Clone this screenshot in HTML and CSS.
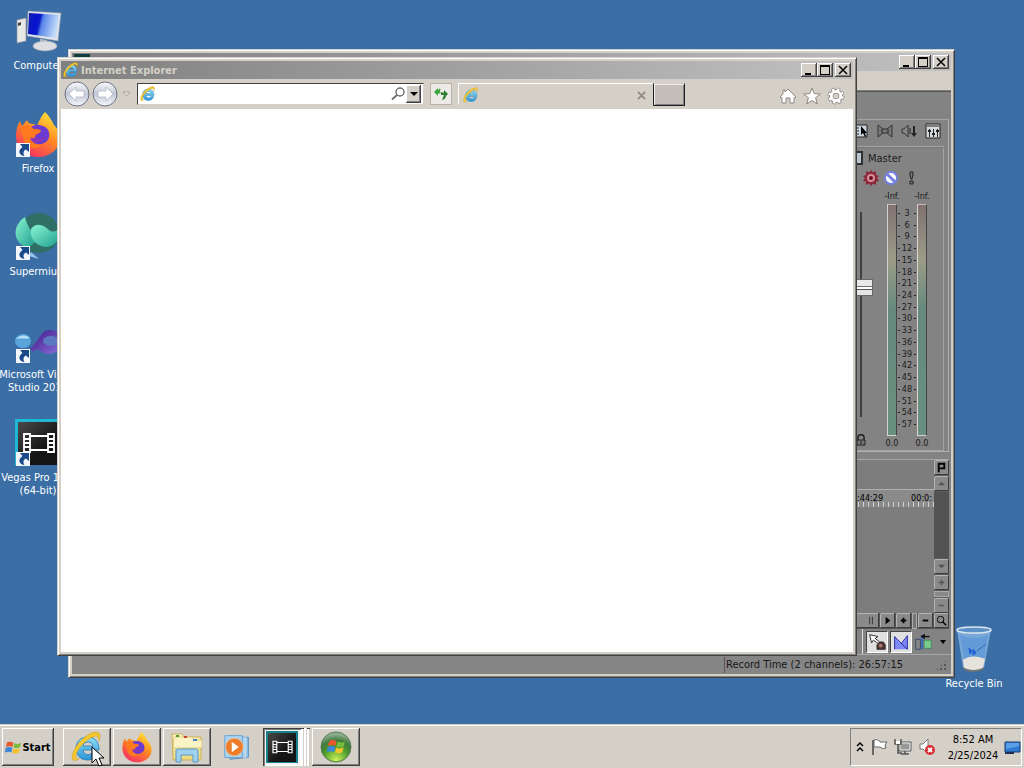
FILE: index.html
```html
<!DOCTYPE html>
<html lang="en">
<head>
<meta charset="utf-8">
<title>Desktop</title>
<link rel="stylesheet" href="styles.css">
</head>
<body>
<svg class="defs" aria-hidden="true">
  <defs>
    <linearGradient id="ieBlue" x1="0" y1="0" x2="0" y2="1"><stop offset="0" stop-color="#8fe0f8"/><stop offset="1" stop-color="#2a94d8"/></linearGradient>
    <linearGradient id="screen" x1="0" y1="0" x2="1" y2=".2"><stop offset="0" stop-color="#1420a8"/><stop offset=".3" stop-color="#0512d0"/><stop offset=".42" stop-color="#0a1cc8"/><stop offset=".52" stop-color="#5a86e8"/><stop offset="1" stop-color="#c4dcfa"/></linearGradient>
    <linearGradient id="fire" x1=".8" y1="0" x2=".2" y2="1"><stop offset="0" stop-color="#ffe83c"/><stop offset=".45" stop-color="#ff8a22"/><stop offset="1" stop-color="#f5286a"/></linearGradient>
    <linearGradient id="navBtn" x1="0" y1="0" x2="0" y2="1"><stop offset="0" stop-color="#fafbfd"/><stop offset=".5" stop-color="#c2c8d6"/><stop offset="1" stop-color="#f4f8fd"/></linearGradient>
    <radialGradient id="orb" cx=".5" cy=".95" r=".95"><stop offset="0" stop-color="#d0f45a"/><stop offset=".45" stop-color="#4f9f2c"/><stop offset=".7" stop-color="#3f7a3c"/><stop offset="1" stop-color="#a8c0a8"/></radialGradient>
    <linearGradient id="teal" x1="0" y1="0" x2="1" y2="1"><stop offset="0" stop-color="#8af4d0"/><stop offset="1" stop-color="#1d9f90"/></linearGradient>
    <linearGradient id="slate" x1="0" y1="0" x2="1" y2="1"><stop offset="0" stop-color="#4a4a4a"/><stop offset=".6" stop-color="#141414"/></linearGradient>
    <linearGradient id="purple" x1="0" y1="0" x2="1" y2="1"><stop offset="0" stop-color="#3c1488"/><stop offset="1" stop-color="#8a72d8"/></linearGradient>
    <linearGradient id="folder" x1="0" y1="0" x2="0" y2="1"><stop offset="0" stop-color="#fbf3bc"/><stop offset="1" stop-color="#ecd67c"/></linearGradient>
    <symbol id="ie" viewBox="0 0 32 32">
      <path d="M28 19H12c.4 3 2.200 4.500 5 4.500 2.300 0 3.800-.8 4.800-2.500h5.700C25.800 26 22 29 16.500 29 9.800 29 5 24.300 5 17.500S9.800 6 16.700 6 28.200 10.800 28 19zM22 15c-.4-2.500-2-4-4.900-4-2.800 0-4.600 1.500-5.100 4z" fill="url(#ieBlue)" stroke="#2478b8" stroke-width=".8"/>
      <path d="M8.500 27.500C3 31.500-.8 29.500 2 21.500 5.500 12.500 15.500 2.500 23.500 1.300c6.500-.8 6.500 4.200 4.300 8.900.4-4.500-1.800-6-5.500-4.500C15.500 8.500 8 16 5.500 22.500c-1.600 4.500-.5 6 3 5z" fill="#f3c62c" stroke="#c99a1c" stroke-width=".5"/>
    </symbol>
    <symbol id="firefox" viewBox="0 0 48 48">
      <path d="M31 2c5 5 7 9 9 13 4 4 6 8 6 13 0 11-10 19-22 19S2 38 2 26c0-5 1-11 4-15l2 5 5-6c1 3 3 4 7 4l3 2c2-5 4-10 8-14z" fill="url(#fire)"/>
      <path d="M17 17c4-3 9-2 12-1 5 2 7 6 6 11-1 7-12 10-17 4-3-3-3-8-1-14z" fill="#6a3bd0"/>
      <path d="M18 22c3-2 6-2 8 0-1 3-4 3-5 5 3 3 8 2 10-1 0 6-11 9-16 3-4-5-3-10 0-13z" fill="#8a35b8"/>
      <path d="M6 16c6-2 11 0 14 3 3 0 6 0 7 2-1 3-6 2-6 6-2 2-4 1-5 0 2 8 9 9 14 7-5 6-16 6-20-3z" fill="#ff7a1e"/>
    </symbol>
    <symbol id="link" viewBox="0 0 14 14">
      <path d="M0 0h14v14H0z" fill="#f2f6fb"/><path d="M4 1h9v8l-3-2.500C7 8 7 10.500 8.500 13 3.500 12.500 1 8 6.500 4z" fill="#1b4a8c"/>
    </symbol>
    <symbol id="film" viewBox="0 0 34 22">
      <path d="M2 1v20M8 1v20M26 1v20M32 1v20M2 2h6M2 7h6M2 11h6M2 15h6M2 20h6M26 2h6M26 7h6M26 11h6M26 15h6M26 20h6M8 4h18M8 18h18" fill="none" stroke="#fff" stroke-width="1.800"/>
    </symbol>
    <symbol id="flag" viewBox="0 0 18 18">
      <path d="M2 4c3-2 5-1 7 0L8 8.500C6 7.500 4 7 1 8.500z" fill="#e8582c"/><path d="M10 4.500c3 1 5 1 7-.5L16 8.500c-2 1.500-5 1.500-7 .5z" fill="#7cbc3c"/><path d="M.8 9.500c3-1.500 5-1 7 0l-1 4.800C5 13.300 3 13-.2 14.300z" fill="#3c86d8"/><path d="M8.700 10c3 1.300 5 1 7-.5l-1 4.800c-2 1.500-5 1.500-7 .4z" fill="#f5c22c"/>
    </symbol>
    <symbol id="min" viewBox="0 0 16 14"><path d="M4 10h6v2H4z"/></symbol>
    <symbol id="max" viewBox="0 0 16 14"><path d="M3 2h10v10H3zM4 4v7h8V4z" fill-rule="evenodd"/></symbol>
    <symbol id="close" viewBox="0 0 16 14"><path d="M4 3l8 8M12 3l-8 8" stroke="#000" stroke-width="1.500"/></symbol>
  </defs>
</svg>

<div class="screen">
  <main class="desktop">
    <nav class="shortcuts" aria-label="Desktop icons">
      <a class="shortcut" href="#computer">
        <svg class="pic" viewBox="0 0 48 48"><path d="M3 13l9-2v23l-9 2z" fill="#e8e8e6" stroke="#8d9299" stroke-width=".7"/><path d="M4 16l3-1v3l-3 1z" fill="#444"/><path d="M14 4l33 2-3 28-31-5z" fill="#dfe3ea" stroke="#8c96a6" stroke-width=".6"/><path d="M15 6l30 2-3 23-28-4z" fill="url(#screen)"/><path d="M26 32l7 1v6h-7z" fill="#b8bcc4"/><ellipse cx="31" cy="39" rx="12" ry="5" fill="#dcdee2" stroke="#9a9fa8" stroke-width=".6"/></svg>
        <span>Computer</span></a>
      <a class="shortcut" href="#firefox">
        <svg class="pic" viewBox="0 0 48 48"><use href="#firefox"/><use href="#link" x="2" y="33" width="14" height="14"/></svg>
        <span>Firefox</span></a>
      <a class="shortcut" href="#supermium">
        <svg class="pic" viewBox="0 0 48 48"><circle cx="25" cy="20" r="20" fill="#2f6f66"/><path d="M11 4c2 10 8 14 10 25-6 8-14 5-18-3C-1 18 4 8 11 4z" fill="url(#teal)"/><path d="M17 16c6-8 14-3 18 1 4 3 8 1 11-2 1 14-9 23-21 17-6-3-9-9-8-16z" fill="url(#teal)"/><path d="M15 43l10 3-8-7z" fill="#9cc4ee"/><use href="#link" x="2" y="33" width="14" height="14"/></svg>
        <span>Supermium</span></a>
      <a class="shortcut" href="#visual-studio">
        <svg class="pic" viewBox="0 0 48 48"><ellipse cx="9" cy="25" rx="8" ry="7" fill="#5aa4dc"/><path d="M2 23c5-5 10-4 14-1-4 1-9 0-14 1z" fill="#b8e0f6"/><path d="M16 32c8-4 10-18 20-18 8 0 12 6 12 12s-6 12-13 12c-9 0-10-8-16-2z" fill="url(#purple)"/><ellipse cx="37" cy="25" rx="8" ry="5" fill="#5c78c0"/><use href="#link" x="2" y="33" width="14" height="14"/></svg>
        <span>Microsoft Visual<br>Studio 2019</span></a>
      <a class="shortcut" href="#vegas">
        <svg class="pic" viewBox="0 0 48 48"><path d="M1 0h47v46H1z" fill="#1fb8d4"/><path d="M4 3h44v43H4z" fill="url(#slate)"/><use href="#film" x="8" y="13" width="34" height="22"/><use href="#link" x="2" y="33" width="14" height="14"/></svg>
        <span>Vegas Pro 16.0<br>(64-bit)</span></a>
    </nav>

    <a class="shortcut bin" href="#recycle">
      <svg class="pic" viewBox="0 0 48 48"><path d="M7 4l6 39c4 4 17 4 21 0l7-39z" fill="#8fbce8" fill-opacity=".75"/><path d="M10 10l4 23h20l4-23c-8 4-20 4-28 0z" fill="#4d8edb" fill-opacity=".5"/><path d="M13 35c6-5 16-4 22-1l-2 9c-5 3-14 3-19 0z" fill="#e6e2dc"/><path d="M19 23l3 3-2 3zM23 24l3 4-3 2z" fill="#2460d4" stroke="#2460d4"/><path d="M36 19l-9 7" stroke="#3468a8"/><path d="M13 42c5 4 16 4 21 0v2c-4 4-17 4-21 0z" fill="#6e7478"/><ellipse cx="24" cy="5" rx="17" ry="3" fill="#5d92c8" stroke="#dbe6ee" stroke-width="1.500"/></svg>
      <span>Recycle Bin</span></a>

    <section class="window vegas" aria-label="Vegas Pro">
      <header class="titlebar">
        <span class="vegas-mark"></span><span class="title"></span>
        <div class="controls">
          <button aria-label="Minimize"><svg><use href="#min"/></svg></button><button aria-label="Maximize"><svg><use href="#max"/></svg></button><button aria-label="Close"><svg><use href="#close"/></svg></button>
        </div>
      </header>
      <div class="menubar"></div>
      <div class="vegas-body">
        <section class="dock">
          <div class="dock-tools">
            <button aria-label="Properties"><svg viewBox="0 0 16 16"><path d="M-4 2h18v12H-4z" fill="#ccd6e2" stroke="#222"/><path d="M1 5h5M1 8h5M1 11h5" stroke="#222"/><path d="M8 3v9l2-2 2 4 1-1-1-3h2z"/></svg></button>
            <button aria-label="Downmix"><svg viewBox="0 0 16 16"><path d="M1 2l5 4h4l5-4v12l-5-4H6l-5 4z" fill="#777" stroke="#333"/><path d="M5 6v4M11 6v4" stroke="#222"/></svg></button>
            <button aria-label="Dim output"><svg viewBox="0 0 16 16"><path d="M1 6h2l4-4v12L3 10H1z" fill="#888" stroke="#333"/><path d="M9 5v6" stroke="#222"/><path d="M12 3h2v7h2l-3 4-3-4h2z" fill="#222"/></svg></button>
            <button aria-label="Mixer"><svg viewBox="0 0 16 16"><path d="M1 1h14v14H1z" fill="#d6dade" stroke="#222"/><path d="M2 3h12" stroke="#222"/><path d="M4.500 6v8M8.500 6v8M12.500 6v8" stroke="#222"/><path d="M3 8h3M7 11h3M11 8h3" stroke="#222" stroke-width="2"/></svg></button>
          </div>
          <div class="strip">
            <div class="strip-name"><i></i>Master</div>
            <div class="strip-tools">
              <svg viewBox="0 0 16 16"><path d="M8 0l2 2.500L13 1v4l3 1-2 2 2 3-3 .500V15l-3-1.500L8 16l-2-2.500L3 15v-3.500L0 11l2-3-2-2 3-1V1l3 1.500z" fill="#8c2638"/><circle cx="8" cy="8" r="4" fill="#d6909a"/><circle cx="8" cy="8" r="2" fill="#6c1020"/></svg>
              <svg viewBox="0 0 16 16"><circle cx="8" cy="8" r="6" fill="#fff" stroke="#7480e0" stroke-width="2"/><path d="M4 4l8 8" stroke="#7480e0" stroke-width="3"/></svg>
              <svg viewBox="0 0 16 16"><path d="M7 2h3v3L9 9H8L7 5zM7 11h3v3H7z" fill="#777" stroke="#222"/></svg>
            </div>
            <div class="mixer">
              <div class="fader"><span class="thumb"></span>
                <svg class="lock" viewBox="0 0 10 12"><path d="M2 6V3c0-3 6-3 6 0v3" fill="none" stroke="#222" stroke-width="1.500"/><path d="M1 6h8v5H1z" fill="#777" stroke="#222"/><path d="M5 7v3" stroke="#222"/></svg></div>
              <div class="meters">
                <b>-Inf.</b><span></span><b>-Inf.</b>
                <i class="meter"></i>
                <ol class="scale"><li>3</li><li>6</li><li>9</li><li>12</li><li>15</li><li>18</li><li>21</li><li>24</li><li>27</li><li>30</li><li>33</li><li>36</li><li>39</li><li>42</li><li>45</li><li>48</li><li>51</li><li>54</li><li>57</li></ol>
                <i class="meter"></i>
                <b>0.0</b><span></span><b>0.0</b>
              </div>
            </div>
          </div>
        </section>
        <section class="timeline">
          <div class="tracks">
            <div class="ruler"><div class="times"><span>:44:29</span><span>00:0:</span></div><div class="ticks"></div></div>
          </div>
          <div class="vscroll">
            <button class="key" aria-label="Marker"><svg viewBox="0 0 14 14"><path d="M4 12V3h6v5H5" fill="none" stroke="#000" stroke-width="2"/></svg></button>
            <button class="key" aria-label="Scroll up"><svg viewBox="0 0 14 14"><path d="M3 9l4-4 4 4z" fill="#555"/></svg></button>
            <span class="track"></span>
            <button class="key" aria-label="Scroll down"><svg viewBox="0 0 14 14"><path d="M3 5l4 4 4-4z" fill="#555"/></svg></button>
            <button class="key" aria-label="Taller tracks"><svg viewBox="0 0 14 14"><path d="M4 7h6M7 4v6" stroke="#555" stroke-width="1.500"/></svg></button>
            <span class="bar"></span>
            <button class="key" aria-label="Shorter tracks"><svg viewBox="0 0 14 14"><path d="M4 7h6" stroke="#555" stroke-width="1.500"/></svg></button>
          </div>
        </section>
        <div class="hscroll">
          <span class="key grab"><svg viewBox="0 0 14 14"><path d="M5 3v8M8 3v8" stroke="#333"/></svg></span>
          <button class="key" aria-label="Scroll right"><svg viewBox="0 0 14 14"><path d="M5 3l5 4-5 4z"/></svg></button>
          <button class="key" aria-label="Zoom in"><svg viewBox="0 0 14 14"><path d="M4 7h6M7 4v6" stroke="#000" stroke-width="2"/></svg></button>
          <span class="bar"></span>
          <button class="key" aria-label="Zoom out"><svg viewBox="0 0 14 14"><path d="M4 7h6" stroke="#000" stroke-width="2"/></svg></button>
          <button class="key" aria-label="Zoom tool"><svg viewBox="0 0 14 14"><circle cx="6" cy="6" r="3.500" fill="none" stroke="#000"/><path d="M8 8l4 4" stroke="#000" stroke-width="1.500"/></svg></button>
        </div>
        <div class="edit-tools">
          <button class="toggle" aria-label="Envelope tool"><svg viewBox="0 0 22 20"><path d="M3 2l2 9 2-3 6 4 1-2-5-4 3-2z" fill="#fff" stroke="#222"/><path d="M11 13l3-3h4l2 3v5h-9z" fill="#5b3434" stroke="#222"/><circle cx="15" cy="14" r="2" fill="#a67a7a"/></svg></button>
          <button class="toggle" aria-label="Crossfades"><svg viewBox="0 0 22 20"><path d="M4 4l7 8 7-8v14H4z" fill="#7c88f4"/><path d="M4 18V4l14 14V3l-7 9" fill="none" stroke="#20209c"/></svg></button>
          <button aria-label="Auto ripple"><svg viewBox="0 0 22 20"><path d="M2 7h5v11H2z" fill="#888" stroke="#346"/><path d="M9 2v16" stroke="#356ac0" stroke-width="2"/><path d="M11 8h8v9h-8z" fill="#77cc8c" stroke="#4f7f5c"/><path d="M17 4h-5" stroke="#111" stroke-width="1.500"/><path d="M12 1L7 4l5 3z" fill="#111"/></svg></button>
          <button class="more" aria-label="Ripple options"><svg viewBox="0 0 8 8"><path d="M1 2h6L4 6z"/></svg></button>
        </div>
      </div>
      <footer class="status"><span>Record Time (2 channels): 26:57:15</span><i class="grip"></i></footer>
    </section>

    <section class="window browser" aria-label="Internet Explorer">
      <header class="titlebar">
        <svg class="mark"><use href="#ie"/></svg><span class="title">Internet Explorer</span>
        <div class="controls">
          <button aria-label="Minimize"><svg><use href="#min"/></svg></button><button aria-label="Maximize"><svg><use href="#max"/></svg></button><button aria-label="Close"><svg><use href="#close"/></svg></button>
        </div>
      </header>
      <div class="navbar">
        <div class="travel">
          <button aria-label="Back"><svg viewBox="0 0 26 26"><circle cx="13" cy="13" r="12" fill="url(#navBtn)" stroke="#6c7280"/><path d="M5 13l7-7v4h8v6h-8v4z" fill="#fff" stroke="#b4b9c6" stroke-width=".8"/></svg></button>
          <button aria-label="Forward"><svg viewBox="0 0 26 26"><circle cx="13" cy="13" r="12" fill="url(#navBtn)" stroke="#6c7280"/><path d="M21 13l-7-7v4H6v6h8v4z" fill="#fff" stroke="#b4b9c6" stroke-width=".8"/></svg></button>
          <button class="recent" aria-label="Recent pages"><svg viewBox="0 0 9 6"><path d="M1 1h7L4.500 5z" fill="#e6e3dd" stroke="#a8a59c"/></svg></button>
        </div>
        <form class="address">
          <svg class="mark"><use href="#ie"/></svg>
          <input type="text" aria-label="Address">
          <button type="button" class="find" aria-label="Search"><svg viewBox="0 0 16 16"><circle cx="10" cy="6" r="4" fill="none" stroke="#707070" stroke-width="1.500"/><path d="M7 9l-5 4.500" stroke="#707070" stroke-width="2"/></svg></button>
          <button type="button" class="drop" aria-label="Show address list"><svg viewBox="0 0 8 8"><path d="M0 2h8L4 6z"/></svg></button>
        </form>
        <button class="refresh" aria-label="Refresh"><svg viewBox="0 0 16 16"><path d="M1 6l4-4v2.500h1.500L8 7v0L6 7.500H5V10z" fill="#3aa53a"/><path d="M5 6l2-3" stroke="#3aa53a" stroke-width="1.500"/><path d="M15 8l-4-4v2.500H8V9h3v0l-2 5c3-1 4-2.500 4-4z" fill="#2c7f2c"/></svg></button>
        <div class="tab"><svg class="mark"><use href="#ie"/></svg><button aria-label="Close tab"><svg viewBox="0 0 10 10"><path d="M1 1l8 8M9 1L1 9" stroke="#8f8b84" stroke-width="2"/></svg></button></div>
        <button class="newtab" aria-label="New tab"></button>
        <div class="tools">
          <button aria-label="Home"><svg viewBox="0 0 18 18"><path d="M9 2l8 8-1.500 1L15 10.500V16h-4v-5H7v5H3v-5.500L2.500 11 1 10l3-3V3h2v2z" fill="#fff" stroke="#8a8781"/></svg></button>
          <button aria-label="Favorites"><svg viewBox="0 0 18 18"><path d="M9 1l2.300 5.700 6 .3-4.700 3.800L14.200 17 9 13.500 3.800 17l1.600-6.200L.7 7l6-.3z" fill="#fff" stroke="#8a8781"/></svg></button>
          <button aria-label="Tools"><svg viewBox="0 0 18 18"><g fill="none"><circle cx="9" cy="9" r="6.500" stroke="#8a8781" stroke-width="4" stroke-dasharray="3 2.100"/><circle cx="9" cy="9" r="4.800" stroke="#8a8781" stroke-width="4.400"/><circle cx="9" cy="9" r="6.500" stroke="#fff" stroke-width="2.600" stroke-dasharray="2.200 2.900" stroke-dashoffset="-.4"/><circle cx="9" cy="9" r="4.700" stroke="#fff" stroke-width="2.800"/></g></svg></button>
        </div>
      </div>
      <div class="page"></div>
    </section>
  </main>

  <footer class="taskbar">
    <button class="start"><svg><use href="#flag"/></svg>Start</button>
    <div class="tasks">
      <button class="task" aria-label="Internet Explorer"><svg viewBox="0 0 32 32"><use href="#ie"/></svg></button>
      <button class="task" aria-label="Firefox"><svg viewBox="0 0 32 32"><use href="#firefox" width="32" height="32"/></svg></button>
      <button class="task" aria-label="Windows Explorer"><svg viewBox="0 0 32 32"><path d="M1 3h10l2 3h17v23H2z" fill="url(#folder)" stroke="#cdb25a"/><path d="M3 6h18l2 3h8v8H2z" fill="#faf3c4" stroke="#d3bc6c" stroke-width=".7"/><path d="M5 4h3v2H5z" fill="#4a9a3c"/><path d="M13 5h3v2h-3z" fill="#c8442c"/><path d="M22 8h4v2h-4z" fill="#4a80c8"/><path d="M5 31V20c0-2 1-2 3-2h16c2 0 3 0 3 2v11h-5v-7H10v7z" fill="#9fd0ee" stroke="#5898c4"/></svg></button>
      <button class="task flat" aria-label="Media Player"><svg viewBox="0 0 32 32"><path d="M8 3l21 2v23l-21 2z" fill="#8fbfe4" stroke="#5288b8"/><path d="M24 4v25M26 4v25" stroke="#d8ecfa"/><path d="M2 3h20v25H2z" fill="#a9d3f0" stroke="#68a0cc"/><circle cx="13" cy="16" r="10" fill="#ee7b28" stroke="#f5b684"/><path d="M10 10l8 6-8 6z" fill="#fff"/></svg></button>
      <button class="task active" aria-label="Vegas Pro"><svg viewBox="0 0 32 32"><path d="M0 0h32v32H0z" fill="#17818e"/><path d="M2 2h28v29H2z" fill="url(#slate)"/><use href="#film" x="5" y="9" width="23" height="14"/></svg></button>
      <span class="stack"></span>
      <button class="task" aria-label="Windows"><svg viewBox="0 0 32 32"><circle cx="16" cy="16" r="15" fill="url(#orb)" stroke="#4f7a4c"/><use href="#flag" x="7" y="6" width="19" height="19"/></svg></button>
    </div>
    <div class="tray">
      <button aria-label="Show hidden icons"><svg class="chev" viewBox="0 0 8 12"><path d="M1 5l3-3 3 3M1 10l3-3 3 3" fill="none" stroke="#000" stroke-width="1.500"/></svg></button>
      <button aria-label="Action Center"><svg viewBox="0 0 18 18"><path d="M3 2v15" stroke="#666" stroke-width="2"/><path d="M4 2c3-1 5 0 6 2h7l-2 3 1 3c-3 1-5 0-6-1H4z" fill="#fff" stroke="#666"/></svg></button>
      <button aria-label="Network"><svg viewBox="0 0 18 18"><path d="M5 4h12v9H5z" fill="#999" stroke="#555"/><path d="M6 5h10v7H6z" fill="none" stroke="#eee"/><path d="M11 13v3M7 16h8" stroke="#555" stroke-width="1.500"/><path d="M1 1v5h6V1M4 6v9h4" fill="none" stroke="#555" stroke-width="1.500"/><path d="M2 3h4v3H2z" fill="#fff"/></svg></button>
      <button aria-label="Volume muted"><svg viewBox="0 0 18 18"><path d="M2 6h3l5-5v15l-5-5H2z" fill="#fff" stroke="#777"/><circle cx="12" cy="12" r="5" fill="#d92c34"/><path d="M10 10l4 4M14 10l-4 4" stroke="#fff" stroke-width="1.800"/></svg></button>
      <div class="clock"><time>8:52 AM</time><time>2/25/2024</time></div>
      <button class="peek" aria-label="Show desktop"><svg viewBox="0 0 18 18"><path d="M2 4h15v10H2z" fill="#2f7bd4" stroke="#1c3c70"/><path d="M3 5h13v3L3 11z" fill="#5a9fe8"/><path d="M2 14h9v2H2z" fill="#1b3052"/></svg></button>
    </div>
  </footer>
  <svg class="cursor" viewBox="0 0 14 22"><path d="M1 1v16l4-4 3 7 3-1-3-7h5z" fill="#fff" stroke="#000"/></svg>
</div>
</body>
</html>
```
FILE: styles.css
```css
* { box-sizing: border-box; }
body {
  margin: 0;
  font: 11px/13px "DejaVu Sans Condensed", "DejaVu Sans", sans-serif;
  color: #000;
}
button { margin: 0; padding: 0; border: 0; background: none; font: inherit; color: inherit; display: grid; place-items: center; }
svg { display: block; flex: none; }
.defs { position: absolute; width: 0; height: 0; }

.screen { position: relative; height: 100vh; display: grid; grid-template-rows: 1fr auto; overflow: hidden; background: #3a6ea5; }
.desktop { position: relative; min-height: 0; }

/* desktop icons */
.shortcuts { width: 76px; padding-top: 7px; }
.shortcut { height: 103px; display: flex; flex-direction: column; align-items: center; gap: 4px; color: #fff; text-align: center; text-decoration: none; white-space: nowrap; }
.pic { width: 48px; height: 48px; }
.bin { position: absolute; right: 12px; bottom: -4px; width: 76px; }

/* windows */
.window { position: absolute; display: flex; flex-direction: column; padding: 3px; background: #d4d0c8; border: 1px solid; border-color: #d4d0c8 #404040 #404040 #d4d0c8; box-shadow: inset 1px 1px #fff, inset -1px -1px #808080; }
.vegas { left: 68px; top: 49px; right: 69px; bottom: 46px; }
.browser { left: 57px; top: 57px; right: 167px; bottom: 68px; }
.titlebar { flex: none; height: 18px; display: flex; align-items: center; gap: 2px; padding: 0 2px; background: linear-gradient(90deg, #808080, #c0c0c0); }
.title { flex: 1; color: #d4d0c8; font-weight: bold; }
.mark { width: 16px; height: 16px; }
.vegas-mark { width: 16px; height: 16px; background: #123c40; }
.controls { display: flex; }
.controls button { width: 16px; height: 14px; background: #d4d0c8; box-shadow: inset -1px -1px #404040, inset 1px 1px #fff, inset -2px -2px #808080; }
.controls button:last-child { margin-left: 2px; }
.controls svg { width: 16px; height: 14px; }

/* browser */
.navbar { flex: none; height: 30px; display: flex; align-items: center; padding-right: 8px; }
.travel { display: flex; align-items: center; gap: 2px; width: 76px; padding-left: 3px; }
.travel svg { width: 26px; height: 26px; }
.travel .recent svg { width: 9px; height: 6px; }
.travel .recent { margin-left: 2px; }
.address { width: 287px; height: 22px; display: flex; align-items: center; padding: 1px 2px; background: #fff; border: 1px solid; border-color: #404040 #d4d0c8 #d4d0c8 #404040; }
.address input { flex: 1; min-width: 0; border: 0; outline: 0; padding: 0 4px; background: none; font: inherit; }
.find svg { width: 16px; height: 16px; }
.drop { width: 15px; height: 18px; background: #d4d0c8; box-shadow: inset -1px -1px #404040, inset 1px 1px #fff, inset -2px -2px #808080; }
.drop svg { width: 8px; height: 8px; }
.refresh { width: 22px; height: 22px; margin: 0 6px; background: #eceae6; border: 1px solid #b8b4ac; }
.refresh svg { width: 16px; height: 16px; }
.tab { width: 195px; height: 22px; display: flex; align-items: center; justify-content: space-between; padding: 2px 6px 0 4px; border: 1px solid; border-color: #fff transparent transparent #fff; }
.tab button svg { width: 9px; height: 9px; }
.newtab { width: 32px; height: 23px; background: #c4c0b9; border: 1px solid; border-color: #d4d0c8 #202020 #202020 #202020; box-shadow: inset 1px 1px #eee, inset -1px -1px #808080; }
.tools { flex: 1; display: flex; justify-content: flex-end; gap: 6px; padding-top: 4px; }
.tools svg { width: 18px; height: 18px; }
.page { flex: 1; background: #fff; }

/* editor */
.menubar { flex: none; height: 20px; border-bottom: 1px solid #808080; }
.vegas-body { flex: 1; min-height: 0; display: flex; flex-direction: column; align-items: flex-end; padding: 27px 2px 0 0; background: #838383; border-top: 1px solid #555; }
.dock { flex: 1; width: 96px; min-height: 0; display: flex; flex-direction: column; padding-right: 4px; border: 1px solid; border-color: #a4a4a4 #b0b0b0 #b0b0b0 #838383; }
.dock-tools { display: flex; gap: 8px; justify-content: flex-end; padding: 3px 3px 7px 0; border-bottom: 1px solid #a8a8a8; }
.dock-tools svg, .strip-tools svg { width: 16px; height: 16px; }
.strip { flex: 1; min-height: 0; display: flex; flex-direction: column; border: 1px solid; border-color: #747474 #a4a4a4 #a4a4a4 #747474; color: #1c1c1c; }
.strip-name { display: flex; align-items: center; gap: 5px; height: 20px; }
.strip-name i { width: 8px; height: 14px; background: #b8c4d0; border: 2px solid #303030; }
.strip-tools { display: flex; gap: 4px; padding: 2px 0 2px 8px; }
.mixer { flex: 1; min-height: 0; display: flex; gap: 14px; font-size: 9px; line-height: 12px; }
.fader { width: 18px; margin-top: 24px; display: flex; flex-direction: column; align-items: center; background: linear-gradient(#404040, #404040) 5px 0 / 2px 205px no-repeat; }
.thumb { flex: none; width: 18px; height: 17px; margin-top: 67px; background: linear-gradient(#e8e8e8 0 6px, #707070 6px 7px, #fff 7px 9px, #555 9px 10px, #e4e4e4 10px); border: 1px solid #666; }
.lock { width: 10px; height: 12px; margin: auto 6px 4px 0; }
.meters { display: grid; grid-template-columns: 10px 20px 10px; grid-template-rows: 16px 1fr 14px; min-height: 0; }
.meters b { display: flex; justify-content: center; align-items: center; font-weight: normal; white-space: nowrap; }
.meter { border: 1px solid; border-color: #d0b8b0 #444 #d8d4cc #d8d4cc; background: linear-gradient(#807272, #9c9c88 24%, #668a7e 45%, #689080); }
.scale { list-style: none; margin: 0; padding: 4px 0 6px; display: flex; flex-direction: column; justify-content: space-between; min-height: 0; }
.scale li { height: 11px; line-height: 11px; text-align: center; background: linear-gradient(#222, #222) 1px 5px / 2px 1px no-repeat, linear-gradient(#222, #222) 17px 5px / 2px 1px no-repeat; }
.timeline { flex: none; width: 96px; height: 154px; margin-top: 7px; display: flex; border-top: 1px solid #a8a8a8; background: #7d7d7d; }
.tracks { flex: 1; min-width: 0; padding-top: 29px; overflow: hidden; }
.ruler { height: 18px; border-top: 1px solid #b0b0b0; background: #8a8a8a; font-size: 9px; line-height: 12px; }
.times { display: flex; justify-content: flex-end; gap: 28px; white-space: nowrap; padding: 2px 2px 0 0; height: 12px; }
.ticks { height: 5px; background: repeating-linear-gradient(90deg, #d0d0d0 0 1px, transparent 1px 5px); }
.vscroll { width: 15px; display: flex; flex-direction: column; gap: 1px; background: #5c5c5c; }
.key { flex: none; width: 15px; height: 15px; border: 1px solid; border-color: #b4b4b4 #3c3c3c #3c3c3c #b4b4b4; border-radius: 2px; background: #8a8a8a; }
.key svg { width: 13px; height: 13px; }
.track { flex: 1; background: #535353; }
.vscroll .bar { height: 6px; border: 1px solid #aaa; background: #888; }
.hscroll { flex: none; display: flex; gap: 1px; height: 16px; width: 96px; justify-content: flex-end; background: #555; }
.grab { width: 26px; padding-left: 11px; }
.hscroll .bar { width: 6px; border: 1px solid #aaa; background: #777; }
.edit-tools { flex: none; width: 87px; height: 25px; display: flex; align-items: center; gap: 2px; border-left: 1px solid #ddd; padding-left: 3px; }
.edit-tools svg { width: 20px; height: 20px; }
.toggle { width: 22px; height: 22px; background: #e0e0e0; border: 1px solid; border-color: #444 #fff #fff #444; }
.edit-tools .more svg { width: 8px; height: 8px; }
.edit-tools .more { margin-left: 3px; }
.status { flex: none; height: 20px; display: flex; justify-content: flex-end; align-items: center; background: #858585; border-top: 1px solid #a8a8a8; padding: 1px 3px 0 0; }
.status span { width: 211px; border-left: 1px solid #555; padding-left: 1px; line-height: 16px; color: #181818; white-space: nowrap; }
.grip { width: 13px; height: 13px; background: radial-gradient(circle, #555 1px, transparent 1px) 0 0 / 4px 4px; clip-path: polygon(100% 0, 100% 100%, 0 100%); }

/* taskbar */
.taskbar { height: 44px; display: flex; padding: 3px 2px 2px; background: #d4d0c8; border-top: 1px solid #d4d0c8; box-shadow: inset 0 1px #fff; }
.start, .task { background: #d4d0c8; box-shadow: inset -1px -1px #404040, inset 1px 1px #fff, inset -2px -2px #808080; }
.start { width: 52px; display: flex; align-items: center; justify-content: center; font-weight: bold; }
.start svg { width: 17px; height: 17px; }
.tasks { flex: 1; display: flex; gap: 2px; padding-left: 9px; }
.task { width: 48px; }
.task svg { width: 32px; height: 32px; }
.task.flat { box-shadow: none; }
.task.flat svg { width: 28px; height: 28px; }
.task.active { width: 38px; background: #f4f2ee; box-shadow: inset 1px 1px #404040, inset 2px 2px #808080, inset -1px -1px #fff; }
.stack { width: 9px; margin-left: -2px; background: repeating-linear-gradient(90deg, #fff 0 2px, #d4d0c8 2px 3px); border-top: 1px dashed #404040; }
.tray { display: flex; align-items: center; padding-left: 2px; border: 1px solid; border-color: #808080 #fff #fff #808080; }
.tray button { padding: 0 3px; }
.tray .peek { padding: 0; }
.tray svg { width: 18px; height: 18px; }
.tray .chev { width: 8px; height: 12px; }
.clock { display: flex; flex-direction: column; gap: 3px; width: 64px; padding-left: 4px; text-align: center; white-space: nowrap; }
.cursor { position: absolute; left: 91px; bottom: 0; width: 14px; height: 22px; }
```
